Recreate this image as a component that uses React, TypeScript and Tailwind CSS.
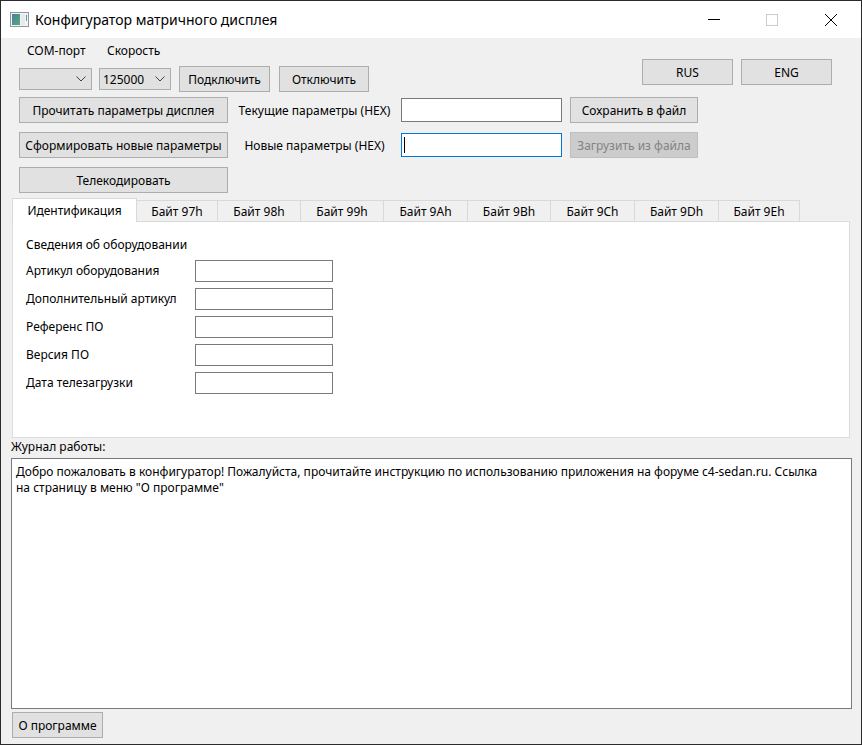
import React from 'react';
import clsx from 'clsx';

const TABS = [
  { id: 'ident', label: 'Идентификация', width: 'w-[125px]' },
  { id: '97', label: 'Байт 97h', width: 'w-[81px]' },
  { id: '98', label: 'Байт 98h', width: 'w-[83px]' },
  { id: '99', label: 'Байт 99h', width: 'w-[83px]' },
  { id: '9A', label: 'Байт 9Ah', width: 'w-[84px]' },
  { id: '9B', label: 'Байт 9Bh', width: 'w-[83px]' },
  { id: '9C', label: 'Байт 9Ch', width: 'w-[84px]' },
  { id: '9D', label: 'Байт 9Dh', width: 'w-[84px]' },
  { id: '9E', label: 'Байт 9Eh', width: 'w-[81px]' },
];

const FIELDS = [
  { id: 'article', label: 'Артикул оборудования' },
  { id: 'extra', label: 'Дополнительный артикул' },
  { id: 'reference', label: 'Референс ПО' },
  { id: 'version', label: 'Версия ПО' },
  { id: 'date', label: 'Дата телезагрузки' },
];

const WELCOME =
  'Добро пожаловать в конфигуратор! Пожалуйста, прочитайте инструкцию по использованию приложения на форуме c4-sedan.ru. Ссылка на страницу в меню "О программе"';

interface ButtonProps {
  children: React.ReactNode;
  className?: string;
  disabled?: boolean;
  onClick?: () => void;
}

function Button({ children, className, disabled, onClick }: ButtonProps) {
  return (
    <button
      type="button"
      disabled={disabled}
      onClick={onClick}
      className={clsx(
        'flex h-[26px] shrink-0 items-center justify-center border pt-[2px] whitespace-nowrap',
        disabled
          ? 'border-[#bfbfbf] bg-[#cccccc] text-[#838383]'
          : 'border-[#adadad] bg-[#e1e1e1] hover:border-[#0078d7] hover:bg-[#e5f1fb]',
        className
      )}
    >
      {children}
    </button>
  );
}

interface SelectProps {
  id: string;
  label: string;
  options: string[];
  className: string;
}

function Select({ id, label, options, className }: SelectProps) {
  return (
    <div className={clsx('flex flex-col gap-[9px]', className)}>
      <label htmlFor={id} className="pl-2 whitespace-nowrap">{label}</label>
      <div className="relative">
        <select
          id={id}
          className="h-[22px] w-full appearance-none border border-[#adadad] bg-[#e1e1e1] pt-[2px] pl-[3px] outline-none"
        >
          {options.map((o) => (
            <option key={o}>{o}</option>
          ))}
        </select>
        <svg
          viewBox="0 0 10 6"
          className="pointer-events-none absolute top-2 right-[6px] h-[6px] w-[10px]"
          fill="none"
          stroke="#404040"
        >
          <path d="M0.5 0.5 L5 5 L9.5 0.5" />
        </svg>
      </div>
    </div>
  );
}

function TitleBar() {
  return (
    <header className="flex h-[37px] shrink-0 items-center bg-white pl-[9px]">
      <svg viewBox="0 0 19 15" className="h-[15px] w-[19px] shrink-0">
        <defs>
          <linearGradient id="screen" x1="0" y1="0" x2="1" y2="1">
            <stop offset="0" stopColor="#4c80a4" />
            <stop offset="1" stopColor="#55a878" />
          </linearGradient>
          <linearGradient id="side" x1="0" y1="0" x2="0" y2="1">
            <stop offset="0" stopColor="#5a86b4" />
            <stop offset="1" stopColor="#5cb27c" />
          </linearGradient>
        </defs>
        <rect x="0.5" y="0.5" width="18" height="14" fill="#f4f4f4" stroke="#8e979d" />
        <rect x="2" y="2" width="8" height="11" fill="url(#screen)" />
        <rect x="11" y="2" width="4" height="11" fill="#e9eaf0" />
        <rect x="16" y="3" width="1" height="6" fill="url(#side)" />
      </svg>
      <h1 className="ml-[6px] flex-1 font-['Noto_Sans',sans-serif] text-sm">
        Конфигуратор матричного дисплея
      </h1>
      <div className="flex shrink-0">
        <button type="button" aria-label="Свернуть" className="flex h-9 w-[58px] items-center justify-center">
          <svg viewBox="0 0 12 12" className="size-3" fill="none" stroke="#000">
            <path d="M0 5.5 H12" />
          </svg>
        </button>
        <button type="button" aria-label="Развернуть" disabled className="flex h-9 w-[58px] items-center justify-center">
          <svg viewBox="0 0 12 12" className="size-3" fill="none" stroke="#cccccc">
            <rect x="0.5" y="0.5" width="11" height="11" />
          </svg>
        </button>
        <button type="button" aria-label="Закрыть" className="flex h-9 w-[60px] items-center justify-center">
          <svg viewBox="0 0 12 12" className="size-3" fill="none" stroke="#000">
            <path d="M0 0 L12 12 M12 0 L0 12" />
          </svg>
        </button>
      </div>
    </header>
  );
}

export default function App() {
  const [tab, setTab] = React.useState('ident');

  return (
    <div className="flex min-h-screen flex-col border border-[#2b2b2b] bg-[#f0f0f0] font-['Noto_Sans',sans-serif] text-[12px] leading-4 text-black">
      <TitleBar />

      <section className="flex flex-col pr-[29px] pl-[18px]">
        <div className="flex h-[54px] items-end">
          <Select id="port" label="COM-порт" options={['']} className="mb-[2px] w-[73px]" />
          <Select id="speed" label="Скорость" options={['125000']} className="mb-[2px] ml-[7px] w-[72px]" />
          <Button className="ml-2 w-[91px]">Подключить</Button>
          <Button className="ml-[9px] w-[90px]">Отключить</Button>
          <div className="mb-[7px] ml-auto flex gap-2">
            <Button className="w-[91px]">RUS</Button>
            <Button className="w-[91px]">ENG</Button>
          </div>
        </div>

        <div className="mt-[5px] grid grid-cols-[209px_157px_161px_128px] items-center gap-x-2 gap-y-[9px]">
          <Button>Прочитать параметры дисплея</Button>
          <label htmlFor="current" className="pt-[2px] text-center whitespace-nowrap">Текущие параметры (HEX)</label>
          <input id="current" className="h-6 border border-[#7a7a7a] bg-white px-1 outline-none" />
          <Button>Сохранить в файл</Button>

          <Button>Сформировать новые параметры</Button>
          <label htmlFor="next" className="pt-[2px] text-center whitespace-nowrap">Новые параметры (HEX)</label>
          <div className="relative flex">
            <input
              id="next"
              className="h-6 w-full border border-[#0078d7] bg-white px-1 caret-transparent outline-none"
            />
            <span className="absolute top-1 left-[3px] h-4 w-px bg-black" />
          </div>
          <Button disabled>Загрузить из файла</Button>

          <Button>Телекодировать</Button>
        </div>
      </section>

      <section className="mt-[5px] mr-[11px] ml-[11px]">
        <div role="tablist" className="relative z-10 -mb-px flex h-6 items-end">
          {TABS.map((t) => (
            <button
              key={t.id}
              type="button"
              role="tab"
              aria-selected={tab === t.id}
              onClick={() => setTab(t.id)}
              className={clsx(
                'shrink-0 border-[#d9d9d9] whitespace-nowrap',
                t.width,
                tab === t.id
                  ? 'h-6 border-x border-t bg-white'
                  : 'h-[22px] border-y border-r bg-[#f0f0f0] pt-[2px]'
              )}
            >
              {t.label}
            </button>
          ))}
        </div>
        <div role="tabpanel" className="h-[217px] border border-[#dcdcdc] bg-white pt-[15px] pl-[13px]">
          <h2>Сведения об оборудовании</h2>
          <div className="mt-[7px] flex flex-col gap-[6px]">
            {FIELDS.map((f) => (
              <div key={f.id} className="flex items-center">
                <label htmlFor={f.id} className="w-[169px] whitespace-nowrap">{f.label}</label>
                <input id={f.id} className="h-[22px] w-[138px] border border-[#7a7a7a] bg-white px-1 outline-none" />
              </div>
            ))}
          </div>
        </div>
      </section>

      <section className="flex flex-1 flex-col pr-[9px] pl-[10px]">
        <label htmlFor="log" className="mt-px mb-[3px]">Журнал работы:</label>
        <textarea
          id="log"
          readOnly
          value={WELCOME}
          className="flex-1 resize-none border border-[#7a7a7a] bg-white py-[5px] pr-6 pl-1 outline-none"
        />
      </section>

      <footer className="flex px-[11px] pt-[3px] pb-[6px]">
        <Button className="w-[91px]">О программе</Button>
      </footer>
    </div>
  );
}
